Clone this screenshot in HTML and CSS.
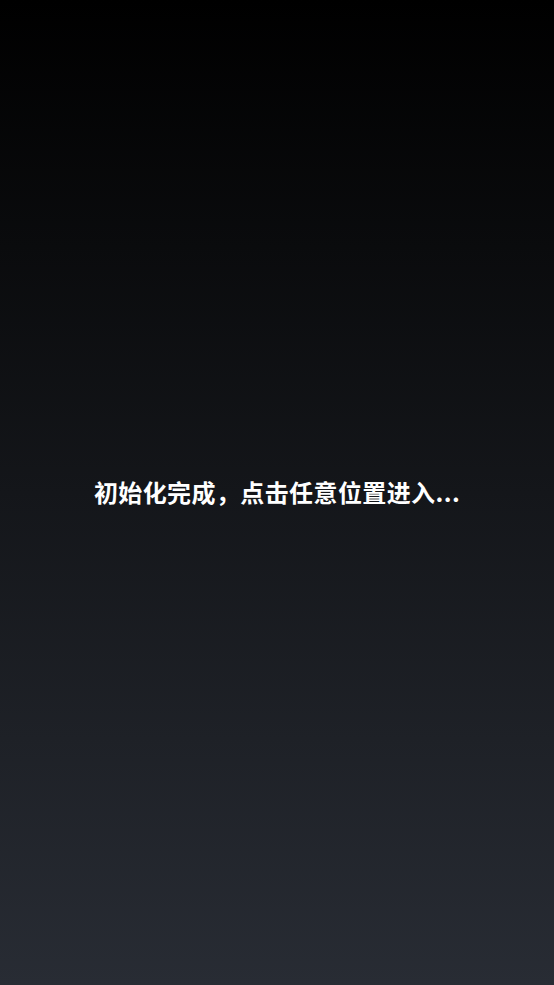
FILE: index.html
```html
<!DOCTYPE html>
<html lang="zh">
<head>
<meta charset="utf-8">
<link rel="stylesheet" href="styles.css">
</head>
<body>
<div class="screen">
  <p class="msg">初始化完成，点击任意位置进入...</p>
</div>
</body>
</html>
```
FILE: styles.css
```css
html, body { margin: 0; padding: 0; height: 100%; }
body { background: #282c34; }
.screen {
  height: 985px;
  background: linear-gradient(to bottom, #000000 0%, #282c34 100%);
  display: flex;
  align-items: center;
  justify-content: center;
}
.msg {
  margin: 0 0 2px 0;
  color: #ffffff;
  font-family: "Noto Sans CJK SC", "Noto Sans", sans-serif;
  font-weight: 700;
  font-size: 24px;
  letter-spacing: 0.4px;
  line-height: 1;
}
```
